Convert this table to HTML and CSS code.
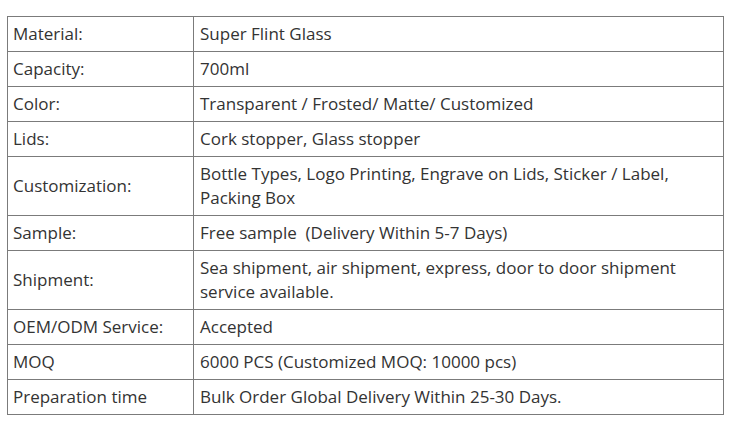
FILE: index.html
```html
<!DOCTYPE html>
<html>
<head>
<meta charset="utf-8">
<link rel="stylesheet" href="styles.css">
</head>
<body>
<div class="wrap">
<table class="spec">
<colgroup><col class="c1"><col class="c2"></colgroup>
<tr><td>Material:</td><td>Super Flint Glass</td></tr>
<tr><td>Capacity:</td><td>700ml</td></tr>
<tr><td>Color:</td><td>Transparent / Frosted/ Matte/ Customized</td></tr>
<tr><td>Lids:</td><td>Cork stopper, Glass stopper</td></tr>
<tr><td>Customization:</td><td>Bottle Types, Logo Printing, Engrave on Lids, Sticker / Label,<br>Packing Box</td></tr>
<tr><td>Sample:</td><td>Free sample &nbsp;(Delivery Within 5-7 Days)</td></tr>
<tr><td>Shipment:</td><td>Sea shipment, air shipment, express, door to door shipment<br>service available.</td></tr>
<tr><td>OEM/ODM Service:</td><td>Accepted</td></tr>
<tr><td>MOQ</td><td>6000 PCS (Customized MOQ: 10000 pcs)</td></tr>
<tr><td>Preparation time</td><td>Bulk Order Global Delivery Within 25-30 Days.</td></tr>
</table>
</div>
</body>
</html>
```
FILE: styles.css
```css
html, body {
  margin: 0;
  padding: 0;
  background: #fff;
}
.wrap {
  padding: 16px 0 0 7px;
}
.spec {
  border-collapse: collapse;
  width: 716px;
  table-layout: fixed;
  font-family: "Open Sans", "Noto Sans", sans-serif;
  font-size: 17px;
  line-height: 24px;
  color: #333;
}
.c1 { width: 186px; }
.c2 { width: 530px; }
.spec td {
  border: 1px solid #7b7b7b;
  padding: 5px 5px;
  vertical-align: middle;
  white-space: nowrap;
}
.spec td + td {
  padding-left: 6px;
}
```
